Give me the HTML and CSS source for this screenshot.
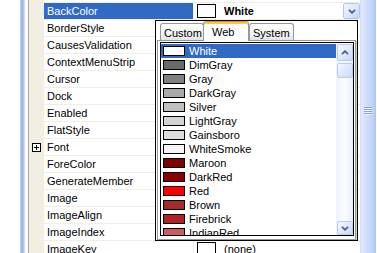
FILE: index.html
```html
<!DOCTYPE html>
<html lang="en">
<head>
    <meta charset="UTF-8">
    <meta name="viewport" content="width=device-width, initial-scale=1.0">
    <title>BackColor</title>
    <link rel="stylesheet" href="styles.css">
</head>
<body>
<div class="designer">
    <div class="outside"></div>
    <div class="frame-edge"></div>
    <div class="frame-gap"></div>

    <div class="grid">
        <div class="row partial"><div class="margin"></div><div class="name"></div><div class="value"></div></div>
        <div class="row">
            <div class="margin"></div>
            <div class="name selected">BackColor</div>
            <div class="value">
                <span class="swatch"></span><b>White</b>
                <span class="drop-btn">
                    <svg width="8" height="5" viewBox="0 0 8 5"><path d="M1 0.8 L4 3.8 L7 0.8" fill="none" stroke="#4d6185" stroke-width="1.8"/></svg>
                </span>
            </div>
        </div>
        <div class="row"><div class="margin"></div><div class="name">BorderStyle</div><div class="value"></div></div>
        <div class="row"><div class="margin"></div><div class="name">CausesValidation</div><div class="value"></div></div>
        <div class="row"><div class="margin"></div><div class="name">ContextMenuStrip</div><div class="value"></div></div>
        <div class="row"><div class="margin"></div><div class="name">Cursor</div><div class="value"></div></div>
        <div class="row"><div class="margin"></div><div class="name">Dock</div><div class="value"></div></div>
        <div class="row"><div class="margin"></div><div class="name">Enabled</div><div class="value"></div></div>
        <div class="row"><div class="margin"></div><div class="name">FlatStyle</div><div class="value"></div></div>
        <div class="row">
            <div class="margin">
                <svg class="expand" width="9" height="9" viewBox="0 0 9 9"><rect x="0.5" y="0.5" width="8" height="8" fill="#fff" stroke="#000"/><path d="M2 4.5 H7 M4.5 2 V7" stroke="#000"/></svg>
            </div>
            <div class="name">Font</div><div class="value"></div>
        </div>
        <div class="row"><div class="margin"></div><div class="name">ForeColor</div><div class="value"></div></div>
        <div class="row"><div class="margin"></div><div class="name">GenerateMember</div><div class="value"></div></div>
        <div class="row"><div class="margin"></div><div class="name">Image</div><div class="value"></div></div>
        <div class="row"><div class="margin"></div><div class="name">ImageAlign</div><div class="value"></div></div>
        <div class="row"><div class="margin"></div><div class="name">ImageIndex</div><div class="value"></div></div>
        <div class="row"><div class="margin"></div><div class="name">ImageKey</div><div class="value"><span class="swatch"></span><span class="plain">(none)</span></div></div>
    </div>

    <div class="pg-scroll"><div class="grip"></div></div>

    <!-- color picker dropdown -->
    <div class="color-popup">
        <div class="tabs">
            <div class="tab custom">Custom</div>
            <div class="tab active">Web</div>
            <div class="tab system">System</div>
        </div>
        <div class="tab-page">
            <div class="color-list">
                <div class="items">
                    <div class="item selected"><span class="chip" style="background:#ffffff"></span>White</div>
                    <div class="item"><span class="chip" style="background:#696969"></span>DimGray</div>
                    <div class="item"><span class="chip" style="background:#808080"></span>Gray</div>
                    <div class="item"><span class="chip" style="background:#a9a9a9"></span>DarkGray</div>
                    <div class="item"><span class="chip" style="background:#c0c0c0"></span>Silver</div>
                    <div class="item"><span class="chip" style="background:#d3d3d3"></span>LightGray</div>
                    <div class="item"><span class="chip" style="background:#dcdcdc"></span>Gainsboro</div>
                    <div class="item"><span class="chip" style="background:#f5f5f5"></span>WhiteSmoke</div>
                    <div class="item"><span class="chip" style="background:#800000"></span>Maroon</div>
                    <div class="item"><span class="chip" style="background:#8b0000"></span>DarkRed</div>
                    <div class="item"><span class="chip" style="background:#ff0000"></span>Red</div>
                    <div class="item"><span class="chip" style="background:#a52a2a"></span>Brown</div>
                    <div class="item"><span class="chip" style="background:#b22222"></span>Firebrick</div>
                    <div class="item"><span class="chip" style="background:#cd5c5c"></span>IndianRed</div>
                </div>
                <div class="list-scroll">
                    <div class="sb-btn">
                        <svg width="8" height="5" viewBox="0 0 8 5"><path d="M1 4.2 L4 1.2 L7 4.2" fill="none" stroke="#4d6185" stroke-width="1.8"/></svg>
                    </div>
                    <div class="sb-thumb"></div>
                    <div class="sb-track"></div>
                    <div class="sb-btn down">
                        <svg width="8" height="5" viewBox="0 0 8 5"><path d="M1 0.8 L4 3.8 L7 0.8" fill="none" stroke="#4d6185" stroke-width="1.8"/></svg>
                    </div>
                </div>
            </div>
        </div>
    </div>
</div>
</body>
</html>
```

FILE: styles.css
```css
/* property grid with the BackColor dropdown open */
body {
    margin: 0;
    font-family: "Liberation Sans", Arial, sans-serif;
    font-size: 11px;
    color: #000;
    background-color: #fff;
    overflow: hidden;
}
.designer {
    position: relative;
    display: flex;
    width: 377px;
    height: 253px;
    overflow: hidden;
}
.outside {
    width: 20px;
    flex-shrink: 0;
}
.frame-edge {
    width: 5px;
    flex-shrink: 0;
    background: linear-gradient(to right, #c6d5f0, #a8bee8, #9cb5e4, #b9ccee, #dde7f8);
}
.frame-gap {
    width: 3px;
    flex-shrink: 0;
    border-right: 1px solid #a7a6aa;
}

/* grid rows */
.grid {
    flex: 1;
    overflow: hidden;
}
.row {
    display: flex;
    height: 17px;
}
.row .margin {
    width: 15px;
    flex-shrink: 0;
    background-color: #f1efe2;
    display: flex;
    align-items: center;
}
.row .name,
.row .value {
    height: 17px;
    box-sizing: border-box;
    border-bottom: 1px solid #f1efe2;
}
.row .name {
    width: 150px;
    flex-shrink: 0;
    padding-left: 3px;
    line-height: 16px;
    border-right: 1px solid #f1efe2;
    white-space: nowrap;
    overflow: hidden;
}
.row .name.selected {
    background-color: #316ac5;
    color: #fff;
}
.row .value {
    flex: 1;
    display: flex;
    align-items: center;
    line-height: 16px;
    white-space: nowrap;
}
.row.partial,
.row.partial .name,
.row.partial .value {
    height: 3px;
}
.expand {
    margin-left: 3px;
}
.swatch {
    width: 19px;
    height: 14px;
    margin-left: 3px;
    margin-right: 8px;
    box-sizing: border-box;
    border: 1px solid #000;
    background-color: #fff;
    flex-shrink: 0;
}
.drop-btn {
    margin-left: auto;
    width: 17px;
    height: 16px;
    box-sizing: border-box;
    border: 1px solid #b3c5f1;
    border-radius: 2px;
    background: linear-gradient(135deg, #f4f7fe, #dce6fc 55%, #c4d4fa);
    display: flex;
    align-items: center;
    justify-content: center;
}

/* outer scrollbar */
.pg-scroll {
    width: 16px;
    margin-right: 1px;
    flex-shrink: 0;
    box-sizing: border-box;
    border-left: 1px solid #d3def9;
    background: linear-gradient(to right, #e3ebfd, #cfdcfc 40%, #c0d1fb 80%, #adc2f3);
}
.grip {
    width: 8px;
    height: 8px;
    margin: 107px 0 0 3px;
    background: repeating-linear-gradient(#8ea5d8 0 1px, #eef3fe 1px 2px);
}

/* dropdown */
.color-popup {
    position: absolute;
    left: 155px;
    top: 20px;
    width: 203px;
    height: 221px;
    box-sizing: border-box;
    border: 1px solid #000;
    background-color: #fff;
    overflow: hidden;
}
.tabs {
    display: flex;
    align-items: flex-end;
    height: 19px;
    padding-left: 4px;
}
.tab {
    box-sizing: border-box;
    height: 17px;
    padding: 2px 0 0 3px;
    line-height: 14px;
    border: 1px solid #919b9c;
    border-bottom: none;
    border-radius: 3px 3px 0 0;
    background: linear-gradient(#ffffff, #f5f5f1 55%, #e2e4e8);
    white-space: nowrap;
}
.tab.custom {
    width: 44px;
}
.tab.active {
    position: relative;
    z-index: 1;
    width: 46px;
    height: 20px;
    margin-left: -1px;
    margin-bottom: -1px;
    padding: 3px 0 2px 8px;
    border-top-color: #e68b2c;
    box-shadow: inset 0 2px 0 #ffc83c;
    background: #fff;
}
.tab.system {
    width: 45px;
}
.tab-page {
    width: 199px;
    height: 200px;
    margin-left: 1px;
    box-sizing: border-box;
    border: 1px solid #919b9c;
    padding: 1px 1px 3px 2px;
    box-shadow: 1px 1px 0 #d2d0c6;
    background-color: #fff;
}
.color-list {
    display: flex;
    height: 194px;
    box-sizing: border-box;
    border: 1px solid #000;
    padding-top: 1px;
    overflow: hidden;
}
.items {
    flex: 1;
    overflow: hidden;
}
.item {
    display: flex;
    align-items: center;
    height: 14px;
    padding-left: 2px;
    line-height: 14px;
    white-space: nowrap;
}
.item.selected {
    background-color: #316ac5;
    color: #fff;
}
.chip {
    width: 22px;
    height: 10px;
    margin-right: 4px;
    box-sizing: border-box;
    border: 1px solid #000;
    flex-shrink: 0;
}
.list-scroll {
    width: 17px;
    display: flex;
    flex-direction: column;
    box-sizing: border-box;
    padding-left: 1px;
    background: linear-gradient(to right, #eef2fb, #fbfcfe 50%, #e8eefa);
}
.sb-btn,
.sb-thumb {
    box-sizing: border-box;
    border: 1px solid #bccbf0;
    border-radius: 2px;
    background: linear-gradient(135deg, #f4f7fe, #dde7fc 55%, #c8d7fa);
}
.sb-btn {
    height: 17px;
    display: flex;
    align-items: center;
    justify-content: center;
}
.sb-btn.down {
    height: 14px;
}
.sb-thumb {
    height: 15px;
    margin-top: 2px;
}
.sb-track {
    flex: 1;
}
```
